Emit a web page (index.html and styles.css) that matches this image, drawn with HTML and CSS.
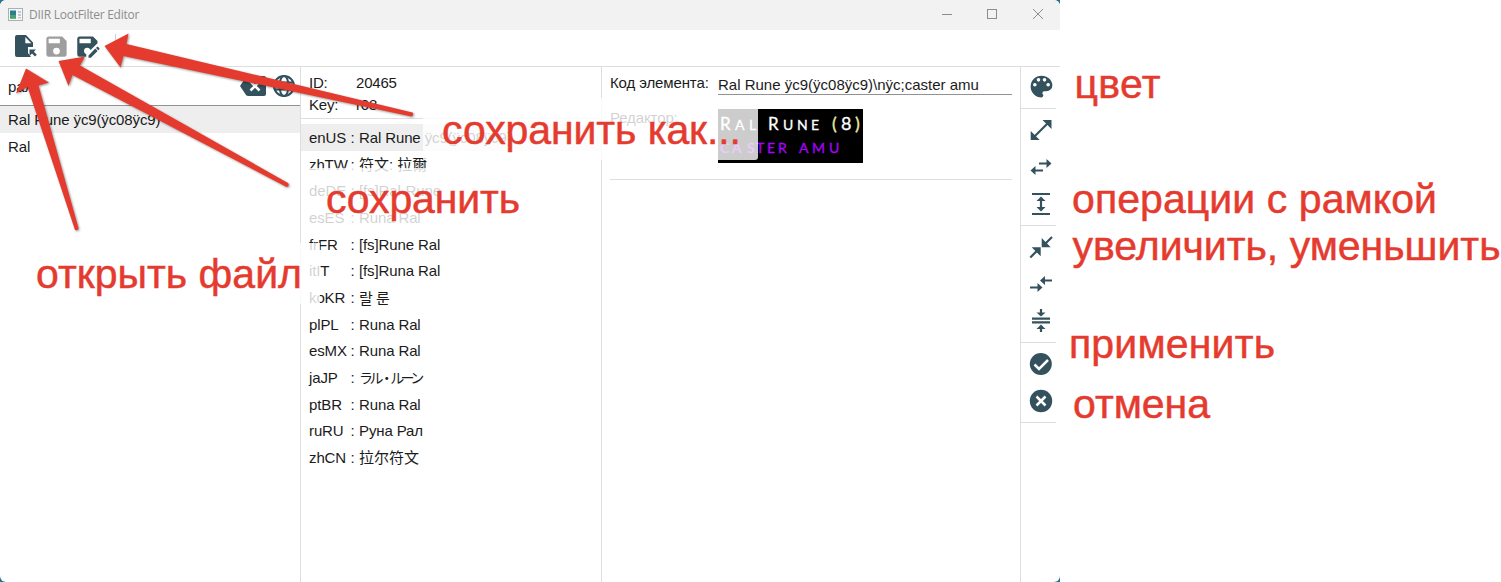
FILE: index.html
```html
<!DOCTYPE html>
<html lang="ru">
<head>
<meta charset="utf-8">
<title>DIIR LootFilter Editor</title>
<link rel="stylesheet" href="styles.css">
</head>
<body>
<div class="desk">
<div class="window">
  <header class="titlebar">
    <svg class="app-icon" width="15" height="13" viewBox="0 0 15 13"><rect x=".5" y=".5" width="14" height="12" fill="#f5f7f8" stroke="#a9b1b5"/><rect x="2" y="2.5" width="6" height="8" fill="#2f7d91"/><rect x="2" y="7" width="6" height="3.5" fill="#4ba36c"/><path d="M10 3h3v2h-3zM10 6h3v2h-3zM10 9h3v1.5h-3z" fill="#c3cbd0"/></svg>
    <span class="title">DIIR LootFilter Editor</span>
    <svg class="win-buttons" width="104" height="12" viewBox="0 0 104 12" fill="none" stroke="#8d8d8d"><path d="M0 6.500h10"/><rect x="45.500" y="1.500" width="9" height="9"/><path d="M91 1l10 10M101 1l-10 10"/></svg>
  </header>
  <div class="toolbar">
    <svg class="icon" width="28" height="28" viewBox="0 0 28 28"><path d="M6 3h9l7 7.500v4.500h-5v6l3 4H6q-2 0-2-2V5q0-2 2-2z"/><path d="M14.300 5v6.300h6z" fill="#fff"/><path d="M18.500 17.500h6.500l-2.200 2.200 3 3-1.800 1.800-3-3-2.500 2.500z"/></svg>
    <svg class="icon disabled" width="27" height="27" viewBox="0 0 24 24"><path d="M15,9H5V5H15M12,19A3,3 0 0,1 9,16A3,3 0 0,1 12,13A3,3 0 0,1 15,16A3,3 0 0,1 12,19M17,3H5C3.890,3 3,3.900 3,5V19A2,2 0 0,0 5,21H19A2,2 0 0,0 21,19V7L17,3Z"/></svg>
    <svg class="icon" width="27" height="27" viewBox="0 0 24 24"><path d="M10,19L10.140,18.860C8.900,18.500 8,17.360 8,16A3,3 0 0,1 11,13C12.360,13 13.500,13.900 13.860,15.140L20,9V7L16,3H4C2.890,3 2,3.900 2,5V19A2,2 0 0,0 4,21H10V19M4,5H14V9H4V5M20.040,12.130C19.900,12.130 19.760,12.190 19.650,12.300L18.650,13.300L20.700,15.350L21.700,14.350C21.920,14.140 21.920,13.790 21.700,13.580L20.420,12.300C20.310,12.190 20.180,12.130 20.040,12.130M18.070,13.880L12,19.940V22H14.060L20.120,15.930L18.070,13.880Z"/></svg>
    <i class="tool-sep"></i>
  </div>
  <main class="panes">
    <section class="pane search-pane">
      <div class="search">
        <span class="query">рал</span>
        <svg class="icon" width="28" height="22" viewBox="0 0 28 22"><path d="M9 1h16q2 0 2 2v16q0 2-2 2H9q-1 0-2-1L1 11l6-9q1-1 2-1z"/><path d="M11.500 6.500l9 9M20.500 6.500l-9 9" stroke="#fff" stroke-width="2.500"/></svg>
        <svg class="globe" width="24" height="24" viewBox="0 0 24 24" fill="none" stroke="#34515e" stroke-width="2"><circle cx="12" cy="12" r="10"/><ellipse cx="12" cy="12" rx="4.500" ry="10"/><path d="M3 8.500h18M3 15.500h18"/></svg>
      </div>
      <div class="result selected">Ral Rune ÿc9(ÿc08ÿc9)</div>
      <div class="result">Ral</div>
    </section>
    <section class="pane lang-pane">
      <div class="meta"><span>ID:</span><span>20465</span><span>Key:</span><span>r08</span></div>
      <div class="langs">
        <div class="lang selected"><span>enUS</span><span>:</span><span>Ral Rune <span class="code">ÿc9(ÿc08ÿc9)</span></span></div>
        <div class="lang"><span>zhTW</span><span>:</span><span class="cjk">符文: 拉爾</span></div>
        <div class="lang"><span>deDE</span><span>:</span><span>[fs]Ral-Rune</span></div>
        <div class="lang"><span>esES</span><span>:</span><span>Runa Ral</span></div>
        <div class="lang"><span>frFR</span><span>:</span><span>[fs]Rune Ral</span></div>
        <div class="lang"><span>itIT</span><span>:</span><span>[fs]Runa Ral</span></div>
        <div class="lang"><span>koKR</span><span>:</span><span class="kr">랄 룬</span></div>
        <div class="lang"><span>plPL</span><span>:</span><span>Runa Ral</span></div>
        <div class="lang"><span>esMX</span><span>:</span><span>Runa Ral</span></div>
        <div class="lang"><span>jaJP</span><span>:</span><span class="jp">ラル・ルーン</span></div>
        <div class="lang"><span>ptBR</span><span>:</span><span>Runa Ral</span></div>
        <div class="lang"><span>ruRU</span><span>:</span><span>Руна Рал</span></div>
        <div class="lang"><span>zhCN</span><span>:</span><span class="cjk">拉尔符文</span></div>
      </div>
    </section>
    <section class="pane editor">
      <div class="field"><span class="label">Код элемента:</span><span class="input">Ral Rune ÿc9(ÿc08ÿc9)\nÿc;caster amu</span></div>
      <div class="field preview-row"><span class="label second">Редактор:</span>
        <svg class="preview" width="145" height="54" viewBox="0 0 145 54">
          <text class="rune" y="21" fill="#fff"><tspan x="2" font-size="17">R</tspan><tspan x="17" font-size="14">A</tspan><tspan x="31" font-size="14">L</tspan><tspan x="50" font-size="17">R</tspan><tspan x="65" font-size="14">U</tspan><tspan x="79" font-size="14">N</tspan><tspan x="93" font-size="14">E</tspan><tspan x="114" font-size="18" fill="#e6e65a">(</tspan><tspan x="123" font-size="18">8</tspan><tspan x="137" font-size="18" fill="#e6e65a">)</tspan></text>
          <text class="rune violet" y="44" fill="#a900ff" font-size="14"><tspan x="2">C</tspan><tspan x="14">A</tspan><tspan x="29">S</tspan><tspan x="38">T</tspan><tspan x="49">E</tspan><tspan x="60">R</tspan><tspan x="81">A</tspan><tspan x="94">M</tspan><tspan x="111">U</tspan></text>
        </svg>
      </div>
    </section>
    <aside class="tools">
      <div class="group">
        <svg class="icon" width="29" height="29" viewBox="0 0 24 24"><path d="M17.500,12A1.500,1.500 0 0,1 16,10.500A1.500,1.500 0 0,1 17.500,9A1.500,1.500 0 0,1 19,10.500A1.500,1.500 0 0,1 17.500,12M14.500,8A1.500,1.500 0 0,1 13,6.500A1.500,1.500 0 0,1 14.500,5A1.500,1.500 0 0,1 16,6.500A1.500,1.500 0 0,1 14.500,8M9.500,8A1.500,1.500 0 0,1 8,6.500A1.500,1.500 0 0,1 9.500,5A1.500,1.500 0 0,1 11,6.500A1.500,1.500 0 0,1 9.500,8M6.500,12A1.500,1.500 0 0,1 5,10.500A1.500,1.500 0 0,1 6.500,9A1.500,1.500 0 0,1 8,10.500A1.500,1.500 0 0,1 6.500,12M12,3A9,9 0 0,0 3,12A9,9 0 0,0 12,21A1.500,1.500 0 0,0 13.500,19.500C13.500,19.110 13.350,18.760 13.110,18.500C12.880,18.230 12.730,17.880 12.730,17.500A1.500,1.500 0 0,1 14.230,16H16A5,5 0 0,0 21,11C21,6.580 16.970,3 12,3Z"/></svg>
      </div>
      <div class="group">
        <svg class="icon line" width="28" height="28" viewBox="0 0 28 28"><path d="M15.500 4h9v9zM3.700 15v9h9z"/><path d="M6 22L22 6"/></svg>
        <svg class="icon line" width="28" height="28" viewBox="0 0 28 28"><path d="M19.500 6v9l5-4.500zM8.500 13v9l-5-4.500z"/><path d="M12 10.500h9M7 17.500h9"/></svg>
        <svg class="icon line" width="28" height="28" viewBox="0 0 28 28"><path d="M9.500 11h9L14 6.500zM9.500 17h9L14 21.500z"/><path d="M5 4h18M5 24h18M14 9v10"/></svg>
      </div>
      <div class="group">
        <svg class="icon line" width="28" height="28" viewBox="0 0 28 28"><path d="M14.700 5v9.300h9zM4.700 14.300h9v9z"/><path d="M25 4l-7 7M3.300 24.500l7-7"/></svg>
        <svg class="icon line" width="28" height="28" viewBox="0 0 28 28"><path d="M18 6v9l-5-4.500zM10.500 13v9l5-4.500z"/><path d="M16 10.500h9M3 17.500h9"/></svg>
        <svg class="icon line" width="28" height="28" viewBox="0 0 28 28"><path d="M9.500 5.500h9L14 9.500zM9.500 22h9L14 17.500z"/><path d="M5 11.700h18M5 15.300h18M14 2v5M14 20v5"/></svg>
      </div>
      <div class="group">
        <svg class="icon" width="28" height="28" viewBox="0 0 28 28"><circle cx="13.800" cy="14" r="11"/><path d="M7.500 14.500l4.500 4.500 9-9" fill="none" stroke="#fff" stroke-width="2.500"/></svg>
        <svg class="icon" width="28" height="28" viewBox="0 0 28 28"><circle cx="14" cy="14" r="11.200"/><path d="M9.500 9.500l9 9M18.500 9.500l-9 9" stroke="#fff" stroke-width="2.500"/></svg>
      </div>
    </aside>
  </main>
</div>
<svg class="notes" width="1501" height="582" viewBox="0 0 1501 582">
  <g class="plates"><path d="M423 98h335v59q0 3-3 3H423z"/><rect x="305" y="168" width="235" height="61"/><rect x="17" y="243" width="303" height="61"/></g>
  <g class="arrows">
    <path d="M26 68.500L49 82.500 38.500 85.500 78.500 228q0 3-3.500 2L27.500 87 16 93.500z"/>
    <path d="M58.500 61L85 56.500 80 65.500 288 183q2 3-1.500 4L72.500 75 68.500 86z"/>
    <path d="M104.500 46L128.500 33.500 126.500 44 412.500 112.500q2 2-1 4L123.500 56 120.500 67.500z"/>
  </g>
  <g class="captions">
    <text x="36" y="288" textLength="266">открыть файл</text>
    <text x="326" y="213" textLength="194">сохранить</text>
    <text x="442" y="144" textLength="299">сохранить как...</text>
    <text x="1074.500" y="98" textLength="86">цвет</text>
    <text x="1072" y="213" textLength="365">операции с рамкой</text>
    <text x="1072.500" y="260" textLength="428">увеличить, уменьшить</text>
    <text x="1069" y="358" textLength="206">применить</text>
    <text x="1073" y="418" textLength="137">отмена</text>
  </g>
</svg>
</div>
</body>
</html>
```
FILE: styles.css
```css
* { box-sizing: border-box; }
body { margin: 0; background: #fff; font: 15px/18px "Liberation Sans", "Noto Sans CJK SC", sans-serif; color: #1b1b1b; }
.desk { position: relative; width: 1501px; height: 582px; overflow: hidden; background: linear-gradient(90deg, #2c7189 1060px, #fff 1060px); }
.window { display: flex; flex-direction: column; width: 1060px; height: 582px; background: #fff; border-radius: 6px; overflow: hidden; }
.titlebar { flex: none; display: flex; align-items: center; height: 30px; padding: 0 14px 0 8px; background: #f2f2f2; }
.app-icon { margin-bottom: 2px; }
.title { margin-left: 6px; font: 12px/16px "Open Sans", sans-serif; letter-spacing: -.25px; color: #8d8d8d; }
.win-buttons { margin-left: auto; margin-bottom: 2px; }
.toolbar { flex: none; display: flex; align-items: center; gap: 5px; height: 37px; padding: 0 0 4px 11px; border-bottom: 1px solid #dedede; }
.icon { display: block; flex: none; fill: #34515e; }
.toolbar .disabled { margin-left: -1px; }
.icon.disabled { fill: #9e9e9e; }
.icon.line { stroke: #34515e; stroke-width: 2.200; }
.icon.line path:first-child { stroke: none; }
.tool-sep { width: 1px; height: 24px; margin-left: 8px; background: #cecece; }
.panes { flex: 1; display: grid; grid-template-columns: 301px 301px 419px 39px; }
.pane { border-right: 1px solid #dedede; overflow: hidden; }
.search { display: flex; align-items: center; height: 39px; padding: 0 4px 0 8px; border-bottom: 1px solid #929292; }
.query { flex: 1; padding-top: 2px; }
.globe { margin-left: 5px; }
.result { height: 27px; padding: 5px 8px; white-space: nowrap; letter-spacing: -.13px; }
.selected { background: #eee; }
.meta { display: grid; grid-template-columns: 47px 1fr; grid-auto-rows: 22px; height: 52px; padding: 7px 8px 0; border-bottom: 1px solid #dedede; letter-spacing: -.2px; }
.langs { padding-top: 5px; }
.lang { display: grid; grid-template-columns: 41.500px 8.500px 1fr; height: 26.670px; padding-left: 8px; line-height: 27px; white-space: nowrap; letter-spacing: -.12px; }
.cjk { letter-spacing: 0; }
.kr { font-family: "Noto Sans CJK KR", sans-serif; }
.jp { font-family: "Noto Sans CJK JP", sans-serif; font-size: 14px; letter-spacing: -3.600px; }
.editor { padding: 8px 8px 0; }
.field { display: flex; align-items: flex-start; }
.label { width: 108px; flex: none; margin-top: -1px; white-space: nowrap; letter-spacing: -.12px; }
.label.second { margin-top: 0; }
.input { flex: 1; height: 20px; padding-top: 1px; border-bottom: 1px solid #929292; white-space: nowrap; }
.preview-row { margin-top: 14px; padding-bottom: 16px; border-bottom: 1px solid #dedede; }
.preview { display: block; background: #000; }
.rune { font-family: Lato, sans-serif; stroke: #fff; stroke-width: .300; }
.rune.violet { stroke: #a900ff; }
.tools { padding-right: 4px; }
.group { display: flex; flex-direction: column; align-items: center; gap: 9px; padding: 7px 0 7px 5px; border-bottom: 1px solid #dedede; }
.group:first-child { padding: 5px 0 7px 5px; }
.notes { position: absolute; left: 0; top: 0; }
.plates { fill: #fff; fill-opacity: .8; }
.arrows { fill: #e53b2f; filter: drop-shadow(1px 1px 1px rgba(0, 0, 0, .4)); }
.captions { fill: #e53b2f; stroke: #e53b2f; stroke-width: .500; font: 41px "Liberation Sans", sans-serif; }
```
